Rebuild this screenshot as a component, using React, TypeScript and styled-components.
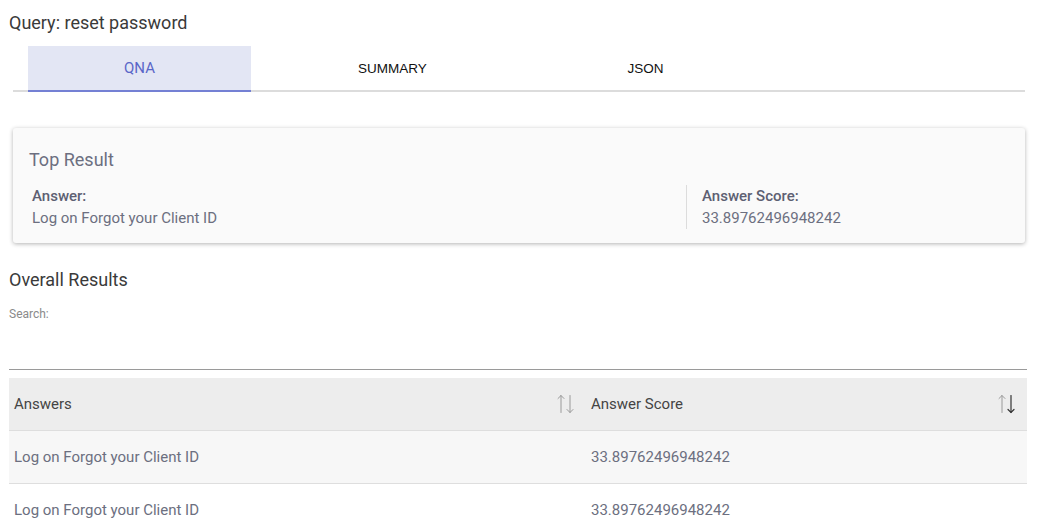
import React from "react";
import styled, { createGlobalStyle } from "styled-components";

const Global = createGlobalStyle`
  html, body { margin: 0; padding: 0; background: #fff; }
  body { font-family: Roboto, "Noto Sans", sans-serif; }
  * { box-sizing: border-box; }
`;

const Page = styled.div`
  padding: 11px 10px 0 9px;
  display: flex;
  flex-direction: column;
`;

const Title = styled.div`
  font-size: 18px;
  color: #3a3a3a;
  line-height: 24px;
`;

const TabBar = styled.div`
  margin: 11px 2px 0 4px;
  display: flex;
  border-bottom: 2px solid #dcdcdc;
`;

const Tab = styled.div<{ $active?: boolean }>`
  width: 223px;
  margin: 0 15px -2px;
  height: 46px;
  display: flex;
  align-items: center;
  justify-content: center;
  font-size: ${(p) => (p.$active ? "15px" : "13.5px")};
  font-family: ${(p) => (p.$active ? "Roboto" : '"Liberation Sans"')}, sans-serif;
  color: ${(p) => (p.$active ? "#5a67c8" : "#111")};
  background: ${(p) => (p.$active ? "#e3e6f4" : "transparent")};
  border-bottom: 2px solid ${(p) => (p.$active ? "#7480d4" : "transparent")};
`;

const Card = styled.div`
  margin: 36px 2px 0 4px;
  background: #fafafa;
  border-radius: 3px;
  box-shadow: 0 1px 4px rgba(0, 0, 0, 0.3);
  padding: 20px 16px 14px 16px;
`;

const CardTitle = styled.div`
  font-size: 18px;
  color: #6c6f80;
  line-height: 24px;
`;

const CardRow = styled.div`
  display: grid;
  grid-template-columns: 657px 1fr;
  margin-top: 13px;
`;

const Field = styled.div<{ $divided?: boolean }>`
  padding-left: ${(p) => (p.$divided ? "15px" : "3px")};
  border-left: ${(p) => (p.$divided ? "1px solid #dcdcdc" : "none")};
  display: flex;
  flex-direction: column;
`;

const Label = styled.div`
  font-size: 15px;
  font-weight: 500;
  color: #5d6072;
  line-height: 22px;
`;

const Value = styled.div`
  font-size: 15px;
  color: #6c6f80;
  line-height: 22px;
`;

const Heading = styled.div`
  margin-top: 25px;
  font-size: 18px;
  color: #3a3a3a;
  line-height: 24px;
`;

const SearchLabel = styled.div`
  margin-top: 14px;
  font-size: 12px;
  color: #8a8a8a;
  line-height: 16px;
`;

const SearchInput = styled.div`
  height: 48px;
  border-bottom: 1px solid #9a9a9a;
`;

const Table = styled.div`
  margin-top: 8px;
  display: flex;
  flex-direction: column;
`;

const Row = styled.div<{ $bg: string; $h: number }>`
  display: grid;
  grid-template-columns: 577px 1fr;
  height: ${(p) => p.$h}px;
  background: ${(p) => p.$bg};
  border-bottom: 1px solid #dedede;
  align-items: center;
`;

const HeadCell = styled.div`
  display: flex;
  align-items: center;
  justify-content: space-between;
  padding: 0 9px 0 5px;
  font-size: 15px;
  color: #444;
`;

const Cell = styled.div`
  padding: 0 5px;
  font-size: 15px;
  color: #6c6f80;
`;

const SortIcon = ({ dark }: { dark?: boolean }) => (
  <svg width="22" height="22" viewBox="0 0 22 22" fill="none">
    <g stroke="#9a9a9a" strokeWidth="1" strokeLinecap="round">
      <path d="M6 2.5 V19.5" />
      <path d="M3 5.5 L6 2.5 L9 5.5" />
    </g>
    <g stroke={dark ? "#333" : "#9a9a9a"} strokeWidth={dark ? 1.2 : 1} strokeLinecap="round">
      <path d="M15 2.5 V19.5" />
      <path d="M12 16.5 L15 19.5 L18 16.5" />
    </g>
  </svg>
);

const rows = [
  { answer: "Log on Forgot your Client ID", score: "33.89762496948242", bg: "#f7f7f7" },
  { answer: "Log on Forgot your Client ID", score: "33.89762496948242", bg: "#ffffff" },
];

export default function App() {
  return (
    <>
      <Global />
      <Page>
        <Title>Query: reset password</Title>
        <TabBar>
          <Tab $active>QNA</Tab>
          <Tab>SUMMARY</Tab>
          <Tab>JSON</Tab>
        </TabBar>
        <Card>
          <CardTitle>Top Result</CardTitle>
          <CardRow>
            <Field>
              <Label>Answer:</Label>
              <Value>Log on Forgot your Client ID</Value>
            </Field>
            <Field $divided>
              <Label>Answer Score:</Label>
              <Value>33.89762496948242</Value>
            </Field>
          </CardRow>
        </Card>
        <Heading>Overall Results</Heading>
        <SearchLabel>Search:</SearchLabel>
        <SearchInput />
        <Table>
          <Row $bg="#ededed" $h={53}>
            <HeadCell>
              Answers
              <SortIcon />
            </HeadCell>
            <HeadCell>
              Answer Score
              <SortIcon dark />
            </HeadCell>
          </Row>
          {rows.map((r, i) => (
            <Row key={i} $bg={r.bg} $h={53}>
              <Cell>{r.answer}</Cell>
              <Cell>{r.score}</Cell>
            </Row>
          ))}
        </Table>
      </Page>
    </>
  );
}
